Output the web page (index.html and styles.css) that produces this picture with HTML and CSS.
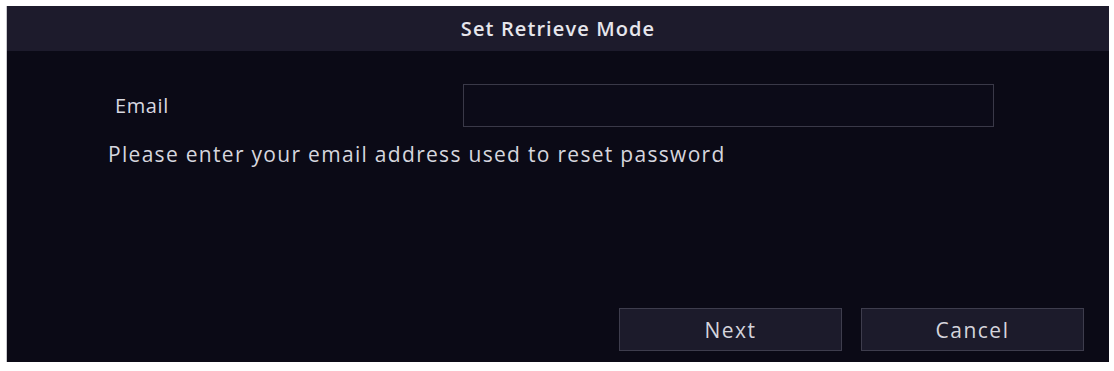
FILE: index.html
```html
<!DOCTYPE html>
<html>
<head>
<meta charset="utf-8">
<link rel="stylesheet" href="styles.css">
</head>
<body>
<div class="dialog">
  <div class="header">Set Retrieve Mode</div>
  <div class="body">
    <div class="row">
      <span class="label">Email</span>
      <div class="input"></div>
    </div>
    <div class="hint">Please enter your email address used to reset password</div>
    <div class="spacer"></div>
    <div class="actions">
      <div class="btn">Next</div>
      <div class="btn">Cancel</div>
    </div>
  </div>
</div>
</body>
</html>
```

FILE: styles.css
```css
html, body {
  margin: 0;
  padding: 0;
  background: #ffffff;
}
body {
  padding: 6px 6px 9px 6px;
  font-family: "Open Sans", "DejaVu Sans", sans-serif;
}
.dialog {
  width: 1102px;
  height: 356px;
  display: flex;
  flex-direction: column;
  background: #0b0a16;
  border-left: 1px solid #c8c8cc;
}
.header {
  height: 45px;
  background: #1d1b2c;
  color: #e6e6ec;
  font-size: 20px;
  font-weight: 600;
  display: flex;
  align-items: center;
  justify-content: center;
  letter-spacing: 1.1px;
}
.body {
  flex: 1;
  display: flex;
  flex-direction: column;
  padding: 33px 25px 11px 101px;
}
.row {
  display: flex;
  align-items: center;
  height: 43px;
}
.label {
  width: 348px;
  padding-left: 7px;
  color: #d8d8e0;
  font-size: 20px;
  letter-spacing: 0.6px;
}
.input {
  width: 529px;
  height: 41px;
  border: 1px solid #3a3948;
  background: #0c0b18;
}
.hint {
  margin-top: 13px;
  color: #d6d6de;
  font-size: 21px;
  letter-spacing: 1.3px;
}
.spacer {
  flex: 1;
}
.actions {
  display: flex;
  justify-content: flex-end;
  gap: 19px;
}
.btn {
  width: 221px;
  height: 41px;
  border: 1px solid #3e3d4d;
  background: #1c1b2b;
  color: #d4d4dc;
  font-size: 21px;
  display: flex;
  align-items: center;
  justify-content: center;
  letter-spacing: 1.5px;
}
```
